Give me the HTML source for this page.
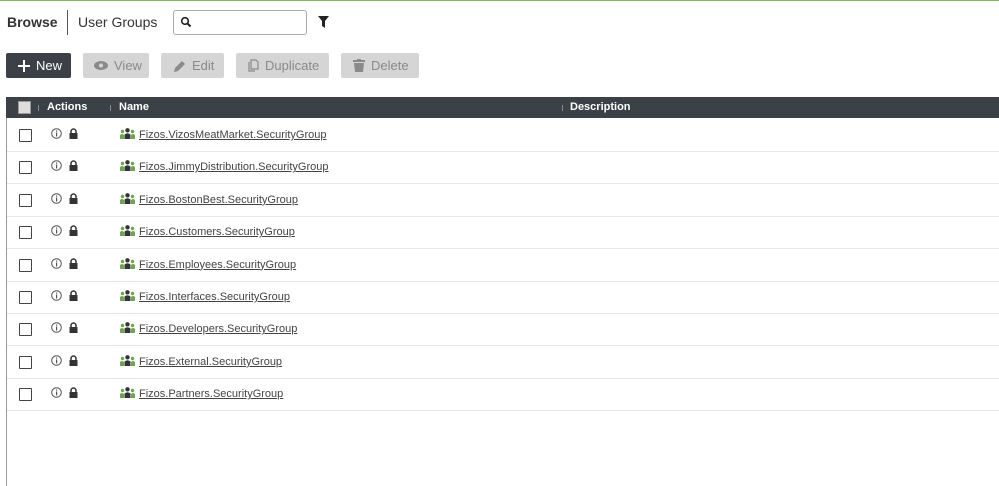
<!DOCTYPE html><html><head><style>
body{margin:0;width:999px;height:486px;overflow:hidden;background:#fff;font-family:"Liberation Sans",sans-serif;position:relative}
.top{position:absolute;left:0;top:0;width:999px;height:1px;background:#7dbb5c}
.t{position:absolute;font-size:14px;color:#333}
.btn{position:absolute;top:53px;height:25px;border-radius:2px;background:#d5d5d5;color:#8a8a8a;font-size:13px;line-height:25px;box-sizing:border-box;display:flex;align-items:center;gap:6px;padding-left:12px}
.hdr{position:absolute;left:6px;top:97px;width:993px;height:21px;background:#3b4146;color:#fff;font-size:11px;font-weight:bold}
.hdr span{position:absolute;top:4px}
.sep{position:absolute;top:8px;width:1px;height:6px;background:#888}
.vl{position:absolute;left:6px;top:118px;width:1px;height:368px;background:#999}
.row{position:absolute;left:7px;width:992px;height:32px;border-bottom:1px solid #e6e6e6}
.cb{position:absolute;left:12px;top:10px;width:11px;height:11px;border:1px solid #444;border-radius:1px}
.row a{position:absolute;left:132px;top:10px;font-size:11px;color:#444;text-decoration:underline}
.ic{position:absolute;top:9px}
</style></head><body>
<div class="top"></div>
<div class="t" style="left:7px;top:14px;font-weight:bold">Browse</div>
<div style="position:absolute;left:67px;top:10px;width:1px;height:25px;background:#555"></div>
<div class="t" style="left:78px;top:14px">User Groups</div>
<div style="position:absolute;left:173px;top:10px;width:134px;height:25px;border:1px solid #aaa;border-radius:3px;box-sizing:border-box"></div>
<svg style="position:absolute;left:180px;top:16px" width="12" height="12" viewBox="0 0 12 12"><circle cx="5" cy="5" r="3.3" fill="none" stroke="#222" stroke-width="1.6"/><path d="M7.5 7.5L10.5 10.5" stroke="#222" stroke-width="2"/></svg>
<svg style="position:absolute;left:318px;top:16px" width="11" height="12" viewBox="0 0 11 12"><path d="M0 0H11L7 5V12L4 10V5Z" fill="#222"/></svg>
<div class="btn" style="left:6px;width:65px;background:#3b4146;color:#fff"><svg width="12" height="12"><path d="M6 0V12M0 6H12" stroke="#fff" stroke-width="2"/></svg>New</div>
<div class="btn" style="left:83px;width:66px;padding-left:11px"><svg width="14" height="9" viewBox="0 0 14 9"><ellipse cx="7" cy="4.5" rx="7" ry="4.5" fill="#8a8a8a"/><circle cx="7" cy="4.5" r="2" fill="#d5d5d5"/></svg>View</div>
<div class="btn" style="left:161px;width:63px;padding-left:13px"><svg width="12" height="12" viewBox="0 0 12 12"><path d="M0 12L1 8L8 1L11 4L4 11Z" fill="#8a8a8a"/></svg>Edit</div>
<div class="btn" style="left:236px;width:93px"><svg width="11" height="13" viewBox="0 0 11 13"><path d="M3 1H8L10 3V10H3Z M1 3V12H7" fill="none" stroke="#8a8a8a" stroke-width="1.2"/></svg>Duplicate</div>
<div class="btn" style="left:341px;width:78px"><svg width="12" height="13" viewBox="0 0 12 13"><rect x="0" y="1" width="12" height="2" fill="#8a8a8a"/><rect x="4" y="0" width="4" height="2" fill="#8a8a8a"/><path d="M1 4H11L10 13H2Z" fill="#8a8a8a"/></svg>Delete</div>
<div class="hdr">
<div style="position:absolute;left:12px;top:4px;width:11px;height:11px;background:#ddd;border:1px solid #999"></div>
<div class="sep" style="left:32px"></div><span style="left:41px">Actions</span>
<div class="sep" style="left:104px"></div><span style="left:113px">Name</span>
<div class="sep" style="left:556px"></div><span style="left:564px">Description</span>
</div>
<div class="vl"></div>
<div id="rows"></div>
<script>
var n=["VizosMeatMarket","JimmyDistribution","BostonBest","Customers","Employees","Interfaces","Developers","External","Partners"],h="";
n.forEach(function(s,i){h+='<div class="row" style="top:'+(119+i*32.4)+'px"><div class="cb"></div>'+
'<svg class="ic" style="left:44px" width="11" height="11" viewBox="0 0 11 11"><circle cx="5.5" cy="5.5" r="4.8" fill="none" stroke="#555" stroke-width="1"/><rect x="5" y="4.5" width="1.2" height="4" fill="#555"/><rect x="5" y="2.5" width="1.2" height="1.2" fill="#555"/></svg>'+
'<svg class="ic" style="left:62px" width="9" height="11" viewBox="0 0 9 11"><path d="M2 5V3.5A2.5 2.5 0 0 1 7 3.5V5" fill="none" stroke="#333" stroke-width="1.5"/><rect x="0.5" y="5" width="8" height="6" fill="#333"/></svg>'+
'<svg class="ic" style="left:113px;top:9px" width="15" height="11" viewBox="0 0 15 11"><circle cx="7.5" cy="2.3" r="2.2" fill="#333"/><path d="M4.5 11V6.5Q7.5 4 10.5 6.5V11Z" fill="#333"/><circle cx="2.5" cy="3.5" r="1.7" fill="#6aa84f"/><path d="M0 11V7Q2 5 4 7V11Z" fill="#6aa84f"/><circle cx="12.5" cy="3.5" r="1.7" fill="#6aa84f"/><path d="M11 11V7Q13 5 15 7V11Z" fill="#6aa84f"/></svg>'+
'<a>Fizos.'+s+'.SecurityGroup</a></div>'});
document.getElementById("rows").innerHTML=h;
</script>
</body></html>
